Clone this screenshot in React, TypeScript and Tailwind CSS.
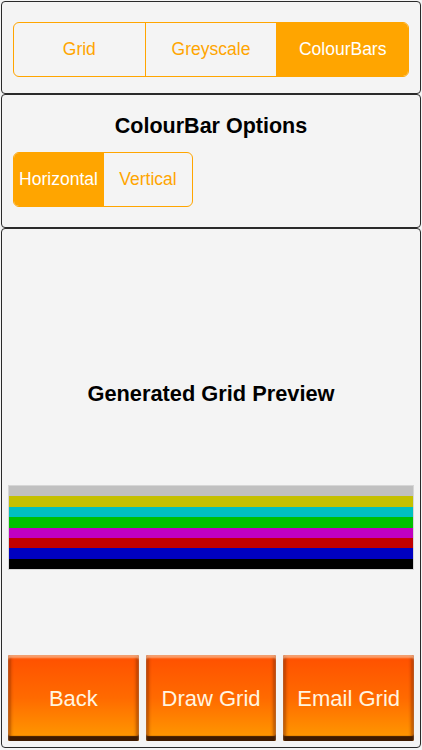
import { useState } from 'react'

const ORANGE = 'bg-[#ffa500]'

const bars = ['#c0c0c0', '#c4c000', '#00c0c0', '#00c000', '#c000c0', '#c00000', '#0000c0', '#000000']

const Segmented = ({
  items,
  active,
  onPick,
  itemClass,
}: {
  items: string[]
  active: number
  onPick: (i: number) => void
  itemClass: string
}) => (
  <div className="flex h-[55px] overflow-hidden rounded-[6px] border border-[#ffa500]">
    {items.map((label, i) => (
      <button
        key={label}
        onClick={() => onPick(i)}
        className={`${itemClass} flex items-center justify-center text-[17.5px] ${
          i > 0 ? 'border-l border-[#ffa500]' : ''
        } ${i === active ? `${ORANGE} text-white` : 'text-[#ffa500]'}`}
      >
        {label}
      </button>
    ))}
  </div>
)

const BigButton = ({ label }: { label: string }) => (
  <button className="flex h-[86px] flex-1 items-center justify-center rounded-[2px] bg-gradient-to-b from-[#ff4f00] via-[#ff6a00] to-[#ff9a00] text-[22px] text-[#fff5e0] shadow-[inset_0_3px_2px_rgba(255,200,160,0.7),inset_0_-5px_1px_#3e1a00,inset_3px_0_3px_rgba(120,40,0,0.5),inset_-3px_0_3px_rgba(120,40,0,0.5)]">
    {label}
  </button>
)

export default function App() {
  const [mode, setMode] = useState(2)
  const [dir, setDir] = useState(0)

  return (
    <div className="flex h-[750px] w-[422px] flex-col bg-[#f4f4f4] font-['Liberation_Sans',Arial,sans-serif]">
      <div className="mx-px mt-px h-[93px] rounded-[4px] border border-[#2a2a2a] px-[11px] pt-[20px]">
        <Segmented
          items={['Grid', 'Greyscale', 'ColourBars']}
          active={mode}
          onPick={setMode}
          itemClass="flex-1"
        />
      </div>
      <div className="mx-px h-[134px] rounded-[4px] border border-[#2a2a2a] px-[11px] pt-[17px]">
        <h2 className="text-center text-[21.5px] font-bold leading-[28px] text-black">ColourBar Options</h2>
        <div className="mt-[12px] w-[180px]">
          <Segmented
            items={['Horizontal', 'Vertical']}
            active={dir}
            onPick={setDir}
            itemClass="w-[90px]"
          />
        </div>
      </div>
      <div className="mx-px mb-[2px] flex flex-1 flex-col rounded-[4px] border border-[#2a2a2a] px-[6px]">
        <h2 className="mt-[151px] text-center text-[21.8px] font-bold leading-[28px] text-black">
          Generated Grid Preview
        </h2>
        <div className="mt-[77px] flex flex-col border border-[#d6d6d6]">
          {bars.map((c) => (
            <div key={c} className="h-[10.4px]" style={{ backgroundColor: c }} />
          ))}
        </div>
        <div className="mt-auto mb-[6px] flex gap-[7px]">
          <BigButton label="Back" />
          <BigButton label="Draw Grid" />
          <BigButton label="Email Grid" />
        </div>
      </div>
    </div>
  )
}
